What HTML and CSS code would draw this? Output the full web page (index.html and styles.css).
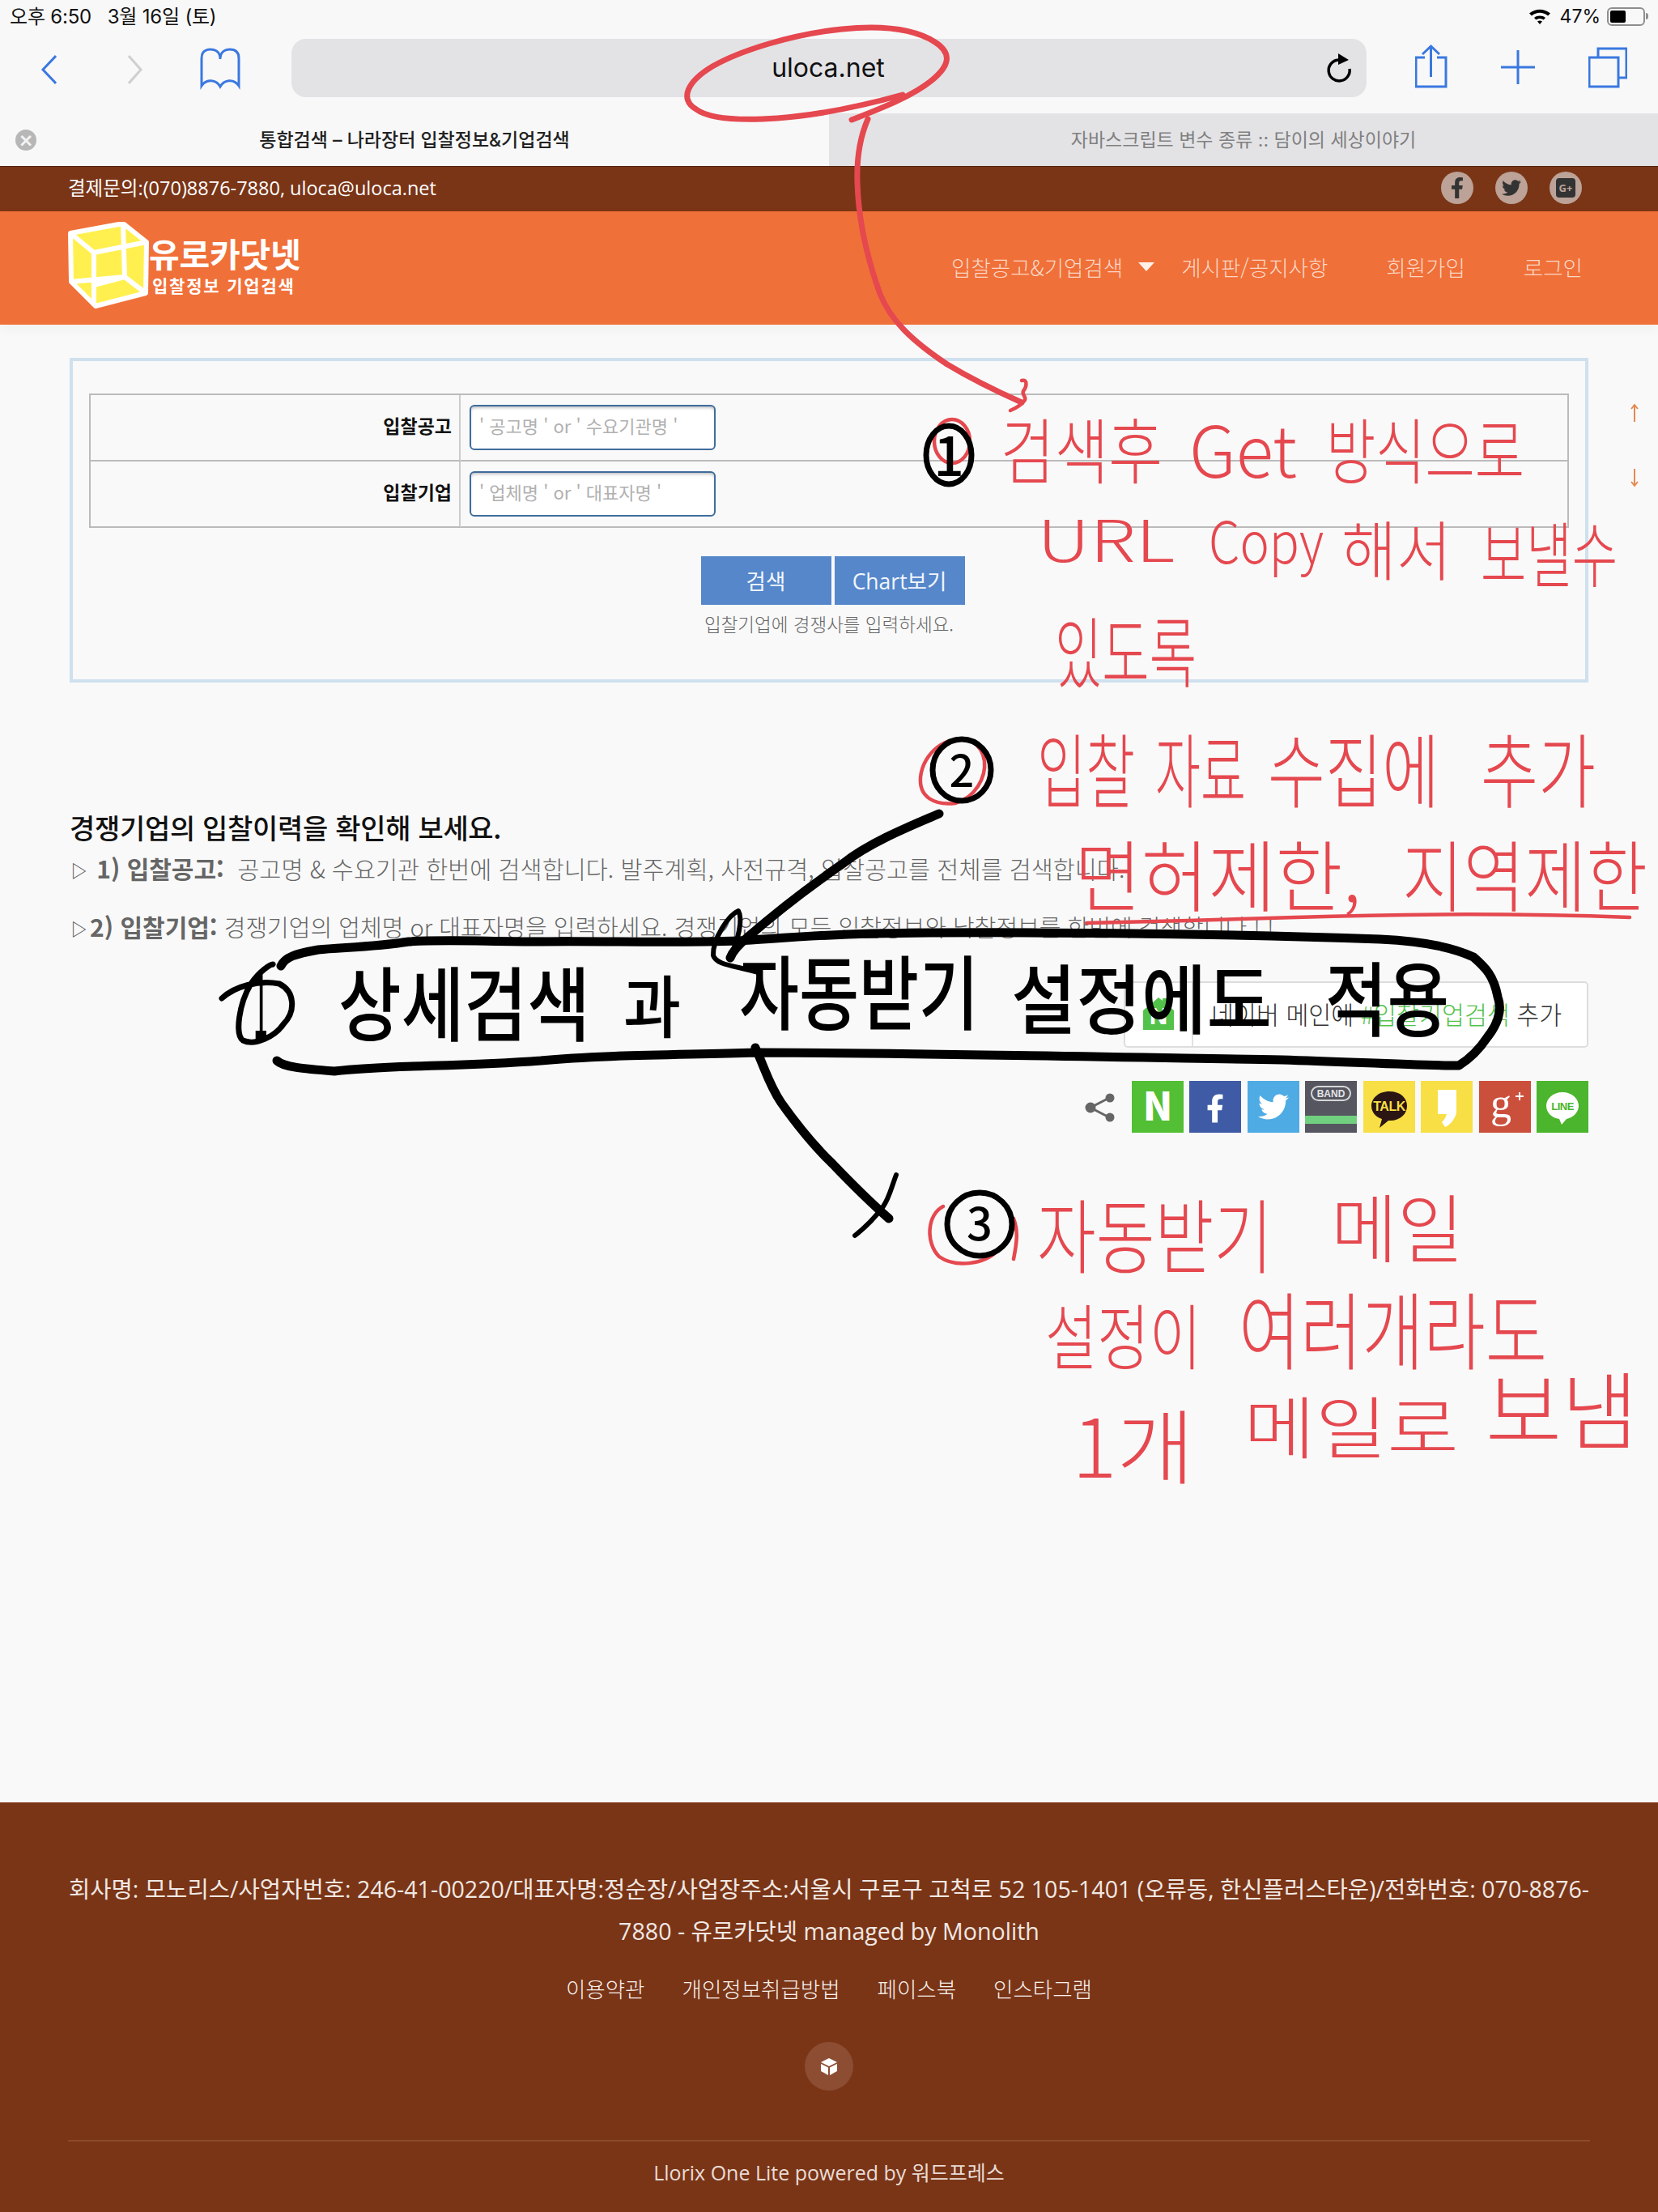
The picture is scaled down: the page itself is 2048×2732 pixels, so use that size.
FILE: index.html
```html
<!DOCTYPE html>
<html lang="ko">
<head>
<meta charset="utf-8">
<title>통합검색 – 나라장터 입찰정보&amp;기업검색</title>
<link rel="stylesheet" href="styles.css">
</head>
<body>
<div class="page">
  <header class="browser">
    <div class="statusbar">
      <span class="clock">오후 6:50&nbsp;&nbsp; 3월 16일 (토)</span>
      <div class="status-right">
        <svg class="wifi" width="28" height="22" viewBox="0 0 28 22"><path d="M1 7.5C8.500 1 19.500 1 27 7.500L24 10.500C18 5.500 10 5.500 4 10.500Z"/><path d="M7 13C11 9.800 17 9.800 21 13L18.500 15.500C16 13.500 12 13.500 9.500 15.500Z"/><path d="M11 17.500C13 16 15 16 17 17.500L14 21Z"/></svg>
        <span class="battery-pct">47%</span>
        <div class="battery"><div class="battery-level"></div></div>
        <div class="battery-tip"></div>
      </div>
    </div>
    <div class="toolbar">
      <svg class="tool back" width="20" height="72" viewBox="0 0 20 72"><path d="M19 21L3 38L19 55"/></svg>
      <svg class="tool forward" width="18" height="72" viewBox="0 0 18 72"><path d="M1 21L16 38L1 55"/></svg>
      <svg class="tool book" width="50" height="72" viewBox="0 0 50 72"><path d="M25 25C25 16 19 13 13 13C5 13 2 17 2 24L2 58C8 49 20 50 25 59C30 50 42 49 48 58L48 24C48 17 45 13 37 13C31 13 25 16 25 25Z"/></svg>
      <div class="urlbar">
        <span class="url">uloca.net</span>
        <svg class="reload" width="32" height="38" viewBox="0 0 32 38"><path d="M29 20A13 13 0 1 1 15 9"/><path class="solid" d="M15 1L28 9L15 15Z"/></svg>
      </div>
      <svg class="tool share" width="40" height="72" viewBox="0 0 40 72"><path d="M12 23H1V59H38V23H27"/><path d="M19.500 47V9M9 19L19.500 9L30 19"/></svg>
      <svg class="tool plus" width="44" height="72" viewBox="0 0 44 72"><path d="M22 14V56M1 35H43"/></svg>
      <svg class="tool tabs" width="48" height="72" viewBox="0 0 48 72"><path d="M1 23H37V59H1Z"/><path d="M12 23V12H47V48H37"/></svg>
    </div>
    <div class="tabbar">
      <div class="tab tab-active">
        <span class="tab-close">×</span>
        <span>통합검색 – 나라장터 입찰정보&amp;기업검색</span>
      </div>
      <div class="tab tab-other"><span>자바스크립트 변수 종류 :: 담이의 세상이야기</span></div>
    </div>
  </header>

  <div class="topline">
    <span class="top-contact">결제문의:(070)8876-7880, uloca@uloca.net</span>
    <div class="top-social">
      <span class="social-dot"><svg width="22" height="26" viewBox="0 0 320 512"><path d="M279.140 288l14.220-92.660h-88.910v-60.130c0-25.350 12.420-50.060 52.240-50.060h40.420V6.260S260.430 0 225.360 0c-73.220 0-121.080 44.380-121.080 124.720v70.620H22.890V288h81.390v224h100.170V288z"/></svg></span>
      <span class="social-dot"><svg width="24" height="24" viewBox="0 0 512 512"><path d="M459.370 151.716c.325 4.548.325 9.097.325 13.645 0 138.720-105.583 298.558-298.558 298.558-59.452 0-114.680-17.219-161.137-47.106 8.447.974 16.568 1.299 25.340 1.299 49.055 0 94.213-16.568 130.274-44.832-46.132-.975-84.792-31.188-98.112-72.772 6.498.974 12.995 1.624 19.818 1.624 9.421 0 18.843-1.300 27.614-3.573-48.081-9.747-84.143-51.980-84.143-102.985v-1.299c13.969 7.797 30.214 12.670 47.431 13.319-28.264-18.843-46.781-51.005-46.781-87.391 0-19.492 5.197-37.360 14.294-52.954 51.655 63.675 129.300 105.258 216.365 109.807-1.624-7.797-2.599-15.918-2.599-24.040 0-57.828 46.782-104.934 104.934-104.934 30.213 0 57.502 12.670 76.670 33.137 23.715-4.548 46.456-13.320 66.599-25.340-7.798 24.366-24.366 44.833-46.132 57.827 21.117-2.273 41.584-8.122 60.426-16.243-14.292 20.791-32.161 39.308-52.628 54.253z"/></svg></span>
      <span class="social-dot"><span class="gplus">G+</span></span>
    </div>
  </div>

  <nav class="navbar">
    <a class="logo">
      <svg class="cube" width="100" height="124" viewBox="0 0 100 124">
        <path class="cube-fill" d="M3 14L68 2L97 25L96 88L34 104L4 74Z"/>
        <path class="cube-line" d="M3 14L68 2L97 25L96 88L34 104L4 74ZM3 14L32 38L97 25M32 38V104M68 2L70 68L96 88M4 74L70 68M32 78L70 68"/>
      </svg>
      <div class="logo-text">
        <span class="logo-main">유로카닷넷</span>
        <span class="logo-sub">입찰정보 기업검색</span>
      </div>
    </a>
    <ul class="menu">
      <li class="menu-first">입찰공고&amp;기업검색<i class="caret"></i></li>
      <li class="menu-board">게시판/공지사항</li>
      <li class="menu-join">회원가입</li>
      <li class="menu-login">로그인</li>
    </ul>
  </nav>

  <main class="content">
    <section class="search-box">
      <div class="form-table">
        <label class="cell cell-label">입찰공고</label>
        <div class="cell cell-input"><input class="field" placeholder="' 공고명 ' or ' 수요기관명 '"></div>
        <label class="cell cell-label cell-last">입찰기업</label>
        <div class="cell cell-input cell-last"><input class="field" placeholder="' 업체명 ' or ' 대표자명 '"></div>
      </div>
      <div class="buttons">
        <button class="btn">검색</button>
        <button class="btn">Chart보기</button>
      </div>
      <p class="hint">입찰기업에 경쟁사를 입력하세요.</p>
    </section>

    <h2 class="lead">경쟁기업의 입찰이력을 확인해 보세요.</h2>
    <p class="desc desc-one"><span class="tri">▷</span> <b>1) 입찰공고:</b>&nbsp; 공고명 &amp; 수요기관 한번에 검색합니다. 발주계획, 사전규격, 입찰공고를 전체를 검색합니다.</p>
    <p class="desc desc-two"><span class="tri">▷</span><b>2) 입찰기업:</b> 경쟁기업의 업체명 or 대표자명을 입력하세요. 경쟁기업의 모든 입찰정보와 낙찰정보를 한번에 검색합니다 ! !</p>

    <div class="naver-row">
      <div class="naver-box">
        <div class="naver-icon">
          <svg width="38" height="40" viewBox="0 0 38 40"><path class="g" d="M0 16L19 0L24 4V1H30V9L38 16V40H0Z"/><text class="naver-n" x="19" y="33" text-anchor="middle">N</text></svg>
        </div>
        <div class="naver-text">네이버 메인에 <em>#입찰기업검색</em> 추가</div>
      </div>
    </div>

    <div class="share-row">
      <svg class="share-icon" width="38" height="36" viewBox="0 0 38 36"><path class="share-line" d="M30 6L7 18L30 30"/><circle cx="7" cy="18" r="6.500"/><circle cx="31" cy="6" r="5.500"/><circle cx="31" cy="30" r="5.500"/></svg>
      <svg class="sq" width="64" height="64" viewBox="0 0 64 64"><rect class="c-naver" width="64" height="64"/><text class="sq-n" x="32" y="49" text-anchor="middle">N</text></svg>
      <svg class="sq" width="64" height="64" viewBox="0 0 64 64"><rect class="c-fb" width="64" height="64"/><svg x="21" y="14" width="22" height="40" viewBox="0 0 320 512"><path class="w" d="M279.140 288l14.220-92.660h-88.910v-60.130c0-25.350 12.420-50.060 52.240-50.060h40.420V6.260S260.430 0 225.360 0c-73.220 0-121.080 44.380-121.080 124.720v70.620H22.890V288h81.390v224h100.170V288z"/></svg></svg>
      <svg class="sq" width="64" height="64" viewBox="0 0 64 64"><rect class="c-tw" width="64" height="64"/><svg x="13" y="13" width="38" height="38" viewBox="0 0 512 512"><path class="w" d="M459.370 151.716c.325 4.548.325 9.097.325 13.645 0 138.720-105.583 298.558-298.558 298.558-59.452 0-114.680-17.219-161.137-47.106 8.447.974 16.568 1.299 25.340 1.299 49.055 0 94.213-16.568 130.274-44.832-46.132-.975-84.792-31.188-98.112-72.772 6.498.974 12.995 1.624 19.818 1.624 9.421 0 18.843-1.300 27.614-3.573-48.081-9.747-84.143-51.980-84.143-102.985v-1.299c13.969 7.797 30.214 12.670 47.431 13.319-28.264-18.843-46.781-51.005-46.781-87.391 0-19.492 5.197-37.360 14.294-52.954 51.655 63.675 129.300 105.258 216.365 109.807-1.624-7.797-2.599-15.918-2.599-24.040 0-57.828 46.782-104.934 104.934-104.934 30.213 0 57.502 12.670 76.670 33.137 23.715-4.548 46.456-13.320 66.599-25.340-7.798 24.366-24.366 44.833-46.132 57.827 21.117-2.273 41.584-8.122 60.426-16.243-14.292 20.791-32.161 39.308-52.628 54.253z"/></svg></svg>
      <svg class="sq" width="64" height="64" viewBox="0 0 64 64"><rect class="c-band" width="64" height="64"/><rect class="band-pill" x="8" y="7" width="48" height="17" rx="8.500"/><text class="band-t" x="32" y="20" text-anchor="middle">BAND</text><rect class="band-green" y="43" width="64" height="10"/></svg>
      <svg class="sq" width="64" height="64" viewBox="0 0 64 64"><rect class="c-yel" width="64" height="64"/><path class="k-bub" d="M32 13C18 13 10 22 10 31C10 39 16 45 23 47L20 58L31 49C45 50 54 41 54 31C54 21 46 13 32 13Z"/><text class="k-t" x="32" y="37" text-anchor="middle">TALK</text></svg>
      <svg class="sq" width="64" height="64" viewBox="0 0 64 64"><rect class="c-yel" width="64" height="64"/><path class="w" d="M21 11H44V39C43 46 36 55 30 57L26 51C30 47 31 44 32 41H21Z"/></svg>
      <svg class="sq" width="64" height="64" viewBox="0 0 64 64"><rect class="c-gp" width="64" height="64"/><text class="gp-t" x="27" y="45" text-anchor="middle">g</text><path class="w" d="M45 18H49V14H51V18H55V20H51V24H49V20H45Z"/></svg>
      <svg class="sq" width="64" height="64" viewBox="0 0 64 64"><rect class="c-line" width="64" height="64"/><path class="w" d="M32 14C20 14 12 22 12 31C12 39 19 46 28 47L31 54L37 47C46 45 52 38 52 31C52 22 44 14 32 14Z"/><text class="line-t" x="32" y="36" text-anchor="middle">LINE</text></svg>
    </div>

    <div class="scroll-arrows">
      <svg width="12" height="24" viewBox="0 0 12 24"><path d="M6 23V2M2 7L6 2L10 7"/></svg>
      <svg width="12" height="24" viewBox="0 0 12 24"><path d="M6 1V22M2 17L6 22L10 17"/></svg>
    </div>
  </main>

  <footer class="footer">
    <p class="company">회사명: 모노리스/사업자번호: 246-41-00220/대표자명:정순장/사업장주소:서울시 구로구 고척로 52 105-1401 (오류동, 한신플러스타운)/전화번호: 070-8876-<br>7880 - 유로카닷넷 managed by Monolith</p>
    <ul class="foot-links">
      <li>이용약관</li>
      <li>개인정보취급방법</li>
      <li>페이스북</li>
      <li>인스타그램</li>
    </ul>
    <div class="foot-badge">
      <svg width="24" height="24" viewBox="0 0 24 24"><path class="w" d="M12 2L22 7L12 12L2 7Z"/><path class="w" d="M2 9L11 13.500V23L2 18Z"/><path class="w" d="M22 9L13 13.500V23L22 18Z"/></svg>
    </div>
    <hr class="foot-rule">
    <p class="credit">Llorix One Lite powered by 워드프레스</p>
  </footer>

  <svg class="ink" width="2048" height="2732" viewBox="0 0 2048 2732">
    <g class="ink-red">
      <path d="M1052 148C1085 135 1125 120 1150 100C1175 80 1175 65 1155 52C1125 33 1080 32 1040 36C980 42 915 62 880 82C850 100 838 122 860 135C880 150 930 148 960 146C1000 143 1050 135 1115 117"/>
      <path d="M1072 147C1062 170 1058 195 1059 225C1060 265 1068 310 1087 363C1100 395 1125 420 1170 450C1200 468 1235 485 1262 497"/>
      <path class="thin" d="M1262 470C1270 468 1268 478 1264 483C1262 488 1268 490 1266 494C1262 500 1255 504 1248 507"/>
      <ellipse class="thin" cx="1176" cy="545" rx="22" ry="27"/>
      <path class="thin" d="M1200 915C1170 905 1140 930 1137 960C1135 985 1155 995 1180 992C1205 985 1218 960 1216 940C1214 925 1205 918 1200 915"/>
      <path class="thin" d="M1165 1490C1145 1500 1143 1535 1160 1552C1180 1566 1215 1562 1232 1545"/>
      <path class="thin" d="M1252 1505C1258 1520 1256 1535 1252 1555"/>
      <path class="thin" d="M1342 1140C1440 1138 1500 1136 1600 1133C1750 1128 1880 1128 2013 1133"/>
    </g>
    <g class="ink-red-text">
      <text x="1236" y="590" font-size="88" textLength="200" lengthAdjust="spacingAndGlyphs">검색후</text>
      <text x="1469" y="590" font-size="88" textLength="133" lengthAdjust="spacingAndGlyphs">Get</text>
      <text x="1638" y="590" font-size="88" textLength="245" lengthAdjust="spacingAndGlyphs">방식으로</text>
      <text x="1281" y="694" font-size="72" textLength="170" lengthAdjust="spacingAndGlyphs">URL</text>
      <text x="1493" y="696" font-size="72" textLength="142" lengthAdjust="spacingAndGlyphs">Copy</text>
      <text x="1657" y="710" font-size="80" textLength="136" lengthAdjust="spacingAndGlyphs">해서</text>
      <text x="1829" y="718" font-size="88" textLength="169" lengthAdjust="spacingAndGlyphs">보낼수</text>
      <text x="1303" y="842" font-size="96" textLength="175" lengthAdjust="spacingAndGlyphs">있도록</text>
      <text x="1281" y="990" font-size="100" textLength="121" lengthAdjust="spacingAndGlyphs">입찰</text>
      <text x="1427" y="990" font-size="100" textLength="112" lengthAdjust="spacingAndGlyphs">자료</text>
      <text x="1566" y="990" font-size="100" textLength="212" lengthAdjust="spacingAndGlyphs">수집에</text>
      <text x="1829" y="990" font-size="100" textLength="142" lengthAdjust="spacingAndGlyphs">추가</text>
      <text x="1327" y="1118" font-size="96" textLength="354" lengthAdjust="spacingAndGlyphs">면허제한,</text>
      <text x="1732" y="1118" font-size="96" textLength="303" lengthAdjust="spacingAndGlyphs">지역제한</text>
      <text x="1281" y="1565" font-size="100" textLength="291" lengthAdjust="spacingAndGlyphs">자동받기</text>
      <text x="1644" y="1552" font-size="92" textLength="164" lengthAdjust="spacingAndGlyphs">메일</text>
      <text x="1291" y="1684" font-size="88" textLength="193" lengthAdjust="spacingAndGlyphs">설정이</text>
      <text x="1530" y="1684" font-size="104" textLength="381" lengthAdjust="spacingAndGlyphs">여러개라도</text>
      <text x="1324" y="1825" font-size="100" textLength="151" lengthAdjust="spacingAndGlyphs">1개</text>
      <text x="1536" y="1795" font-size="84" textLength="266" lengthAdjust="spacingAndGlyphs">메일로</text>
      <text x="1835" y="1782" font-size="104" textLength="188" lengthAdjust="spacingAndGlyphs">보냄</text>
    </g>
    <g class="ink-black">
      <path d="M342 1310C350 1318 375 1320 413 1323C480 1315 560 1318 668 1310C740 1303 830 1303 933 1300C1100 1300 1350 1305 1584 1309C1680 1312 1750 1316 1802 1316C1820 1305 1830 1292 1838 1280C1852 1262 1855 1245 1850 1231C1845 1205 1835 1195 1820 1182C1790 1168 1750 1162 1705 1160C1500 1153 1250 1150 1076 1153C1000 1155 950 1160 913 1162C830 1165 750 1162 668 1163C600 1163 550 1160 505 1163C460 1170 420 1170 393 1173C365 1178 352 1182 347 1193"/>
      <path d="M1160 1005C1125 1020 1075 1040 1042 1066C1000 1095 955 1130 923 1158C912 1167 905 1175 902 1183"/>
      <path class="thin-b" d="M902 1183C912 1160 918 1135 912 1125C900 1130 880 1160 881 1180C885 1192 905 1192 937 1201"/>
      <path d="M933 1294C945 1320 950 1340 965 1362C985 1390 1005 1415 1028 1437C1050 1460 1075 1485 1098 1505"/>
      <path class="thin-b" d="M1107 1451C1100 1470 1098 1480 1091 1490C1080 1505 1070 1515 1056 1526"/>
      <path class="mid-b" d="M274 1233C290 1218 320 1210 345 1215C365 1225 365 1250 350 1265C340 1280 315 1292 300 1285C290 1278 295 1240 310 1215C320 1200 335 1190 337 1191"/>
      <ellipse class="mid-b" cx="1172" cy="562" rx="28" ry="36"/>
      <ellipse class="mid-b" cx="1188" cy="951" rx="36" ry="38"/>
      <ellipse class="mid-b" cx="1210" cy="1512" rx="40" ry="39"/>
    </g>
    <g class="ink-black-text">
      <text x="418" y="1278" font-size="100" textLength="311" lengthAdjust="spacingAndGlyphs">상세검색</text>
      <text x="770" y="1275" font-size="84" textLength="71" lengthAdjust="spacingAndGlyphs">과</text>
      <text x="913" y="1264" font-size="100" textLength="296" lengthAdjust="spacingAndGlyphs">자동받기</text>
      <text x="1249" y="1270" font-size="94" textLength="322" lengthAdjust="spacingAndGlyphs">설정에도</text>
      <text x="1637" y="1272" font-size="100" textLength="153" lengthAdjust="spacingAndGlyphs">적용</text>
      <text x="1172" y="588" font-size="66" text-anchor="middle">1</text>
      <text x="1188" y="972" font-size="54" text-anchor="middle">2</text>
      <text x="1210" y="1532" font-size="56" text-anchor="middle">3</text>
      <text x="322" y="1284" font-size="116" text-anchor="middle" textLength="18" lengthAdjust="spacingAndGlyphs">1</text>
    </g>
  </svg>
</div>
</body>
</html>
```
FILE: styles.css
```css
* { box-sizing: border-box; }
html, body { margin: 0; padding: 0; }
body { background: #f9f9f9; font-family: "Open Sans", "Noto Sans CJK KR", sans-serif; color: #555; }
p, h2, ul { margin: 0; padding: 0; }
ul { list-style: none; }

.page { position: relative; width: 2048px; min-height: 2732px; display: flex; flex-direction: column; overflow: hidden; }

/* browser chrome */
.browser { background: #f8f8f8; font-family: "Inter", "Noto Sans CJK KR", sans-serif; }
.statusbar { height: 40px; display: flex; justify-content: space-between; align-items: center; padding: 0 12px 0 12px; }
.clock { font-size: 24px; color: #111; letter-spacing: -0.200px; margin-top: -3px; }
.status-right { display: flex; align-items: center; }
.wifi { fill: #000; margin-right: 11px; }
.battery-pct { font-size: 23px; color: #111; margin-right: 8px; }
.battery { width: 47px; height: 23px; border: 2px solid #8e8e8e; border-radius: 6px; padding: 2px; }
.battery-level { width: 19px; height: 100%; background: #000; border-radius: 2px; }
.battery-tip { width: 3px; height: 8px; background: #8e8e8e; margin-left: 1px; border-radius: 0 3px 3px 0; }

.toolbar { height: 100px; display: flex; align-items: flex-start; padding: 8px 0 0 50px; }
.tool { fill: none; stroke: #3a78e0; stroke-width: 3; flex: none; }
.forward { stroke: #cfcfcf; margin-left: 88px; }
.book { margin-left: 71px; }
.urlbar { position: relative; margin-left: 63px; width: 1328px; height: 72px; border-radius: 18px; background: #e3e3e6; display: flex; align-items: center; justify-content: center; }
.url { font-size: 32px; color: #111; margin-top: -2px; margin-right: 2px; }
.reload { position: absolute; right: 18px; top: 17px; fill: none; stroke: #000; stroke-width: 3.500; }
.reload .solid { fill: #000; stroke: none; }
.share { margin-left: 60px; }
.plus { margin-left: 65px; }
.tabs { margin-left: 65px; }

.tabbar { display: flex; height: 65px; }
.tab { flex: 1; position: relative; display: flex; align-items: center; justify-content: center; font-size: 23px; padding-bottom: 3px; }
.tab-active { color: #222; font-weight: 500; }
.tab-other { background: #e3e3e6; color: #808080; }
.tab-close { position: absolute; left: 19px; top: 20px; width: 26px; height: 26px; border-radius: 50%; background: #b7b7b7; color: #f4f4f4; font-size: 28px; line-height: 24px; text-align: center; }

/* site header */
.topline { height: 56px; background: #7a3517; border-top: 1px solid #52230e; color: #fff; font-size: 23.500px; display: flex; justify-content: space-between; align-items: center; padding: 0 94px 0 84px; }
.top-contact { margin-top: -5px; }
.top-social { display: flex; gap: 27px; margin-top: -4px; }
.social-dot { width: 40px; height: 40px; border-radius: 50%; background: #bca297; display: flex; align-items: center; justify-content: center; fill: #333; }
.gplus { width: 24px; height: 24px; background: #333; color: #bca297; border-radius: 4px; font-size: 13px; font-weight: 700; line-height: 24px; text-align: center; }

.navbar { height: 140px; background: #f07039; display: flex; justify-content: space-between; align-items: center; padding: 0 93px 0 84px; box-shadow: 0 6px 14px rgba(0, 0, 0, .04); }
.logo { display: flex; align-items: flex-start; }
.cube { margin-top: 10px; flex: none; }
.cube-fill { fill: #fff04f; }
.cube-line { fill: none; stroke: #fff; stroke-width: 6; stroke-linejoin: round; }
.logo-text { display: flex; flex-direction: column; margin: 24px 0 0 0; color: #fff; font-family: "Noto Sans CJK KR", sans-serif; font-weight: 700; white-space: nowrap; }
.logo-main { font-size: 41px; line-height: 48px; letter-spacing: -0.200px; }
.logo-sub { font-size: 21px; line-height: 26px; margin: 3px 0 0 4px; letter-spacing: 1.800px; }

.menu { display: flex; align-items: center; color: #fbd8c6; font-size: 26.500px; font-family: "Noto Sans CJK KR", sans-serif; font-weight: 300; margin-top: -3px; }
.menu-first { display: flex; align-items: center; }
.caret { width: 0; height: 0; margin-left: 19px; border-left: 10px solid transparent; border-right: 10px solid transparent; border-top: 11px solid #fff0e8; }
.menu-board { margin-left: 33px; }
.menu-join { margin-left: 72px; }
.menu-login { margin-left: 72px; }

/* main */
.content { flex: 1; padding: 41px 86px 0; position: relative; font-family: "Noto Sans CJK KR", sans-serif; }
.search-box { height: 401px; border: 4px solid #cfe0ee; padding: 40px 20px 0; text-align: center; }
.form-table { display: grid; grid-template-columns: 457px 1fr; border: 2px solid #bbb; border-bottom: 0; }
.cell { height: 82px; border-bottom: 2px solid #bbb; }
.cell-label { border-right: 2px solid #ccc; display: flex; align-items: center; justify-content: flex-end; padding: 0 9px 6px 0; color: #111; font-size: 23px; font-weight: 700; }
.cell-input { display: flex; align-items: center; padding-left: 11px; }
.field { width: 304px; height: 56px; background: #fff; border: 2px solid #3f6c9c; border-radius: 6px; box-shadow: inset 0 3px 4px -2px #aaa; padding: 0 10px 6px; font: 22px "Noto Sans CJK KR", sans-serif; outline: 0; }
.field::placeholder { color: #b0b0b0; }
.buttons { display: flex; justify-content: center; gap: 4px; margin: 35px 0 0 9px; }
.btn { width: 161px; height: 60px; border: 0; background: #5687cb; color: #f2f6fb; font: 26.500px "Open Sans", "Noto Sans CJK KR", sans-serif; padding: 0 0 2px; }
.hint { margin-top: 6px; font-size: 22.500px; line-height: 34px; color: #666; font-weight: 300; }

.lead { margin-top: 159px; font-size: 34px; line-height: 40px; font-weight: 500; color: #111; letter-spacing: -0.300px; }
.desc { font-size: 29.400px; line-height: 40px; color: #666; font-weight: 300; white-space: nowrap; }
.desc b { font-weight: 700; color: #666; font-size: 30px; line-height: 1; }
.desc-one { margin-top: 10px; }
.desc-two { margin-top: 32px; font-size: 29px; }
.tri { font-family: "DejaVu Sans", sans-serif; font-size: 25px; line-height: 1; }

.naver-row { display: flex; justify-content: flex-end; margin-top: 48px; }
.naver-box { width: 574px; height: 82px; display: flex; background: #fff; border: 2px solid #ddd; border-radius: 5px; }
.naver-icon { width: 84px; border-right: 2px solid #e2e2e2; padding: 18px 0 0 22px; }
.g { fill: #53c24a; }
.naver-n { fill: #fff; font: 800 28px "Noto Sans", sans-serif; }
.naver-text { flex: 1; padding: 0 0 2px 22px; display: flex; align-items: center; white-space: pre; font-size: 30.400px; color: #333; font-weight: 300; }
.naver-text em { font-style: normal; color: #53c24a; }

.share-row { display: flex; justify-content: flex-end; align-items: center; gap: 7.500px; margin-top: 41px; }
.share-icon { fill: #666; margin-right: 12px; margin-top: 1px; }
.share-line { fill: none; stroke: #666; stroke-width: 3; }
.sq { flex: none; }
.w { fill: #fff; }
.c-naver { fill: #53bf35; }
.c-fb { fill: #3f5ba6; }
.c-tw { fill: #4fabe4; }
.c-band { fill: #555660; }
.c-yel { fill: #f7df45; }
.c-gp { fill: #cb503c; }
.c-line { fill: #4bb52d; }
.sq-n { fill: #fff; font: 900 48px "Noto Sans CJK KR", sans-serif; }
.band-pill { fill: none; stroke: #d6d6d8; stroke-width: 2; }
.band-t { fill: #e3e3e5; font: 700 12px "Liberation Sans", sans-serif; }
.band-green { fill: #71d07f; }
.k-bub { fill: #2b1614; }
.k-t { fill: #f7df45; font: 700 16px "Liberation Sans", sans-serif; letter-spacing: -0.500px; }
.gp-t { fill: #fff; font: 400 52px "Liberation Serif", serif; }
.line-t { fill: #4bb52d; font: 700 13px "Liberation Sans", sans-serif; letter-spacing: -0.500px; }

.scroll-arrows { position: absolute; top: 97px; right: 23px; display: flex; flex-direction: column; gap: 56px; }
.scroll-arrows svg { fill: none; stroke: #e58a50; stroke-width: 2; }

/* footer */
.footer { background: #7a3517; border-top: 1px solid #8a4a30; height: 506px; padding: 80px 84px 0; text-align: center; color: #f0e8e3; font-size: 28.600px; }
.company { line-height: 52px; white-space: nowrap; font-weight: 400; }
.foot-links { display: flex; justify-content: center; gap: 46px; margin-top: 28px; font-size: 26.500px; line-height: 36px; color: #f8f2ee; font-weight: 300; }
.foot-badge { width: 60px; height: 60px; margin: 47px auto 0; border-radius: 50%; background: #8c4d33; display: flex; align-items: center; justify-content: center; }
.foot-rule { height: 2px; border: 0; margin: 61px 0 0; background: #8c4a2c; }
.credit { margin-top: 20px; font-size: 25px; line-height: 36px; color: #e9dcd5; }

/* hand-drawn annotation layer */
.ink { position: absolute; left: 0; top: 0; pointer-events: none; fill: none; stroke-linecap: round; stroke-linejoin: round; }
.ink-red path, .ink-red ellipse { stroke: #e5484f; stroke-width: 7; }
.ink-red .thin { stroke-width: 4.500; }
.ink-red-text { fill: #e5484f; font-family: "Noto Sans CJK KR", sans-serif; font-weight: 300; }
.ink-black path, .ink-black ellipse { stroke: #000; stroke-width: 11; }
.ink-black .thin-b { stroke-width: 6; }
.ink-black .mid-b { stroke-width: 7; }
.ink-black-text { fill: #000; font-family: "Noto Sans CJK KR", sans-serif; font-weight: 500; }
```
